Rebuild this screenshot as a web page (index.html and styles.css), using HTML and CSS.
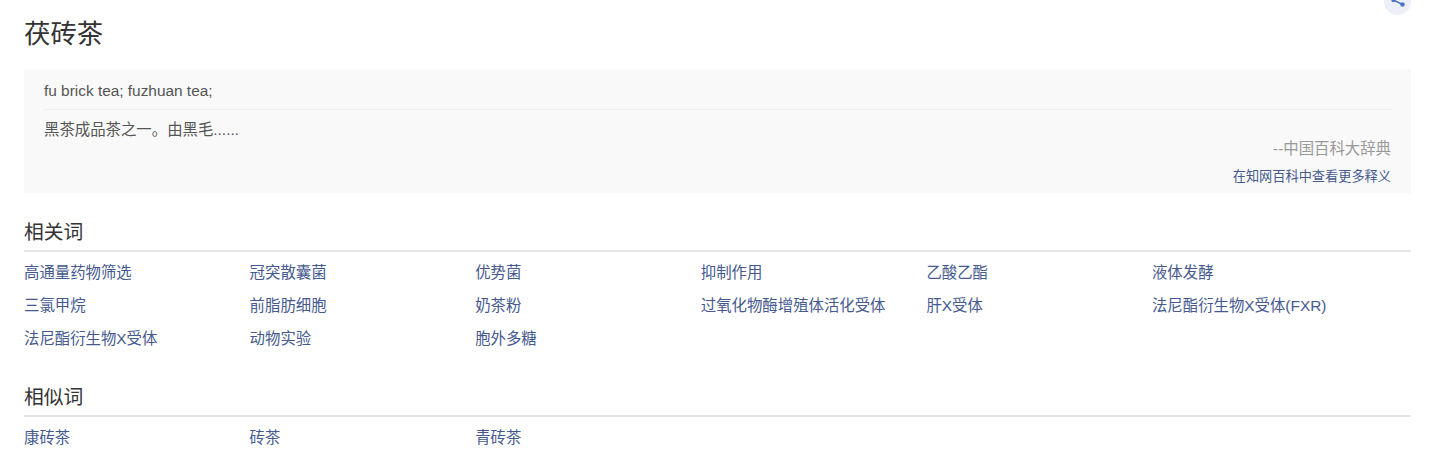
FILE: index.html
```html
<!DOCTYPE html>
<html lang="zh-CN">
<head>
    <meta charset="UTF-8">
    <meta name="viewport" content="width=device-width, initial-scale=1.0">
    <title>茯砖茶</title>
    <link rel="stylesheet" href="styles.css">
</head>
<body>
    <div class="share-bar">
        <a class="share-btn" href="#" aria-label="share">
            <svg width="16" height="16" viewBox="0 0 16 16">
                <path d="M12.5 1.5 L3.5 6 L12.5 10.5" class="share-line"/>
                <circle cx="12.5" cy="1.5" r="2.2" class="share-dot"/>
                <circle cx="3.5" cy="6" r="2.2" class="share-dot"/>
                <circle cx="12.5" cy="10.5" r="2.2" class="share-dot"/>
            </svg>
        </a>
    </div>

    <h1 class="word-title">茯砖茶</h1>

    <!-- Definition -->
    <div class="define-box">
        <p class="define-en">fu brick tea; fuzhuan tea;</p>
        <p class="define-cn">黑茶成品茶之一。由黑毛......</p>
        <p class="define-source">--中国百科大辞典</p>
        <p class="define-more"><a href="#">在知网百科中查看更多释义</a></p>
    </div>

    <!-- Related words -->
    <h2 class="section-title">相关词</h2>
    <ul class="word-grid">
        <li><a href="#">高通量药物筛选</a></li>
        <li><a href="#">冠突散囊菌</a></li>
        <li><a href="#">优势菌</a></li>
        <li><a href="#">抑制作用</a></li>
        <li><a href="#">乙酸乙酯</a></li>
        <li><a href="#">液体发酵</a></li>
        <li><a href="#">三氯甲烷</a></li>
        <li><a href="#">前脂肪细胞</a></li>
        <li><a href="#">奶茶粉</a></li>
        <li><a href="#">过氧化物酶增殖体活化受体</a></li>
        <li><a href="#">肝X受体</a></li>
        <li><a href="#">法尼酯衍生物X受体(FXR)</a></li>
        <li><a href="#">法尼酯衍生物X受体</a></li>
        <li><a href="#">动物实验</a></li>
        <li><a href="#">胞外多糖</a></li>
    </ul>

    <!-- Similar words -->
    <h2 class="section-title">相似词</h2>
    <ul class="word-grid">
        <li><a href="#">康砖茶</a></li>
        <li><a href="#">砖茶</a></li>
        <li><a href="#">青砖茶</a></li>
    </ul>
</body>
</html>
```

FILE: styles.css
```css
* {
    margin: 0;
    padding: 0;
    box-sizing: border-box;
}

html, body {
    height: 100%;
    overflow: hidden;
}

body {
    font-family: "Liberation Sans", "Noto Sans CJK SC", sans-serif;
    background-color: #fff;
    color: #333;
    padding: 0 18px 0 24px;
}

a {
    color: #45598f;
    text-decoration: none;
}

/* Share button, cut off by the top of the window */
.share-bar {
    display: flex;
    justify-content: flex-end;
    height: 0;
}

.share-btn {
    display: flex;
    align-items: center;
    justify-content: center;
    width: 27px;
    height: 27px;
    border-radius: 50%;
    background-color: #edf0f9;
    margin-top: -12px;
}

.share-line {
    fill: none;
    stroke: #4f74c4;
    stroke-width: 1.5;
}

.share-dot {
    fill: #4f74c4;
}

.word-title {
    font-size: 26.4px;
    font-weight: 400;
    line-height: 36px;
    padding-top: 16px;
    color: #333;
}

/* Definition box */
.define-box {
    background-color: #f9f9f9;
    margin-top: 17px;
    padding: 11px 20px 0;
    height: 124px;
}

.define-en {
    font-size: 15.4px;
    line-height: 22px;
    color: #555;
    padding-bottom: 7px;
    border-bottom: 1px dotted #e4e4e4;
}

.define-cn {
    font-size: 15.4px;
    line-height: 20px;
    color: #555;
    margin-top: 10px;
}

.define-source {
    font-size: 15.4px;
    line-height: 20px;
    color: #999;
    text-align: right;
    margin-top: -1px;
}

.define-more {
    font-size: 13.2px;
    line-height: 18px;
    text-align: right;
    margin-top: 9px;
}

/* Word sections */
.section-title {
    font-size: 19.8px;
    font-weight: 400;
    line-height: 26px;
    color: #333;
    margin-top: 26px;
    padding-bottom: 5px;
    border-bottom: 2px solid #e5e5e5;
}

.word-grid {
    list-style: none;
    display: grid;
    grid-template-columns: repeat(6, 225.6px);
    grid-auto-rows: 33px;
    font-size: 15.4px;
    line-height: 20px;
    padding-top: 11px;
}

.word-grid + .section-title {
    margin-top: 22px;
}
```
